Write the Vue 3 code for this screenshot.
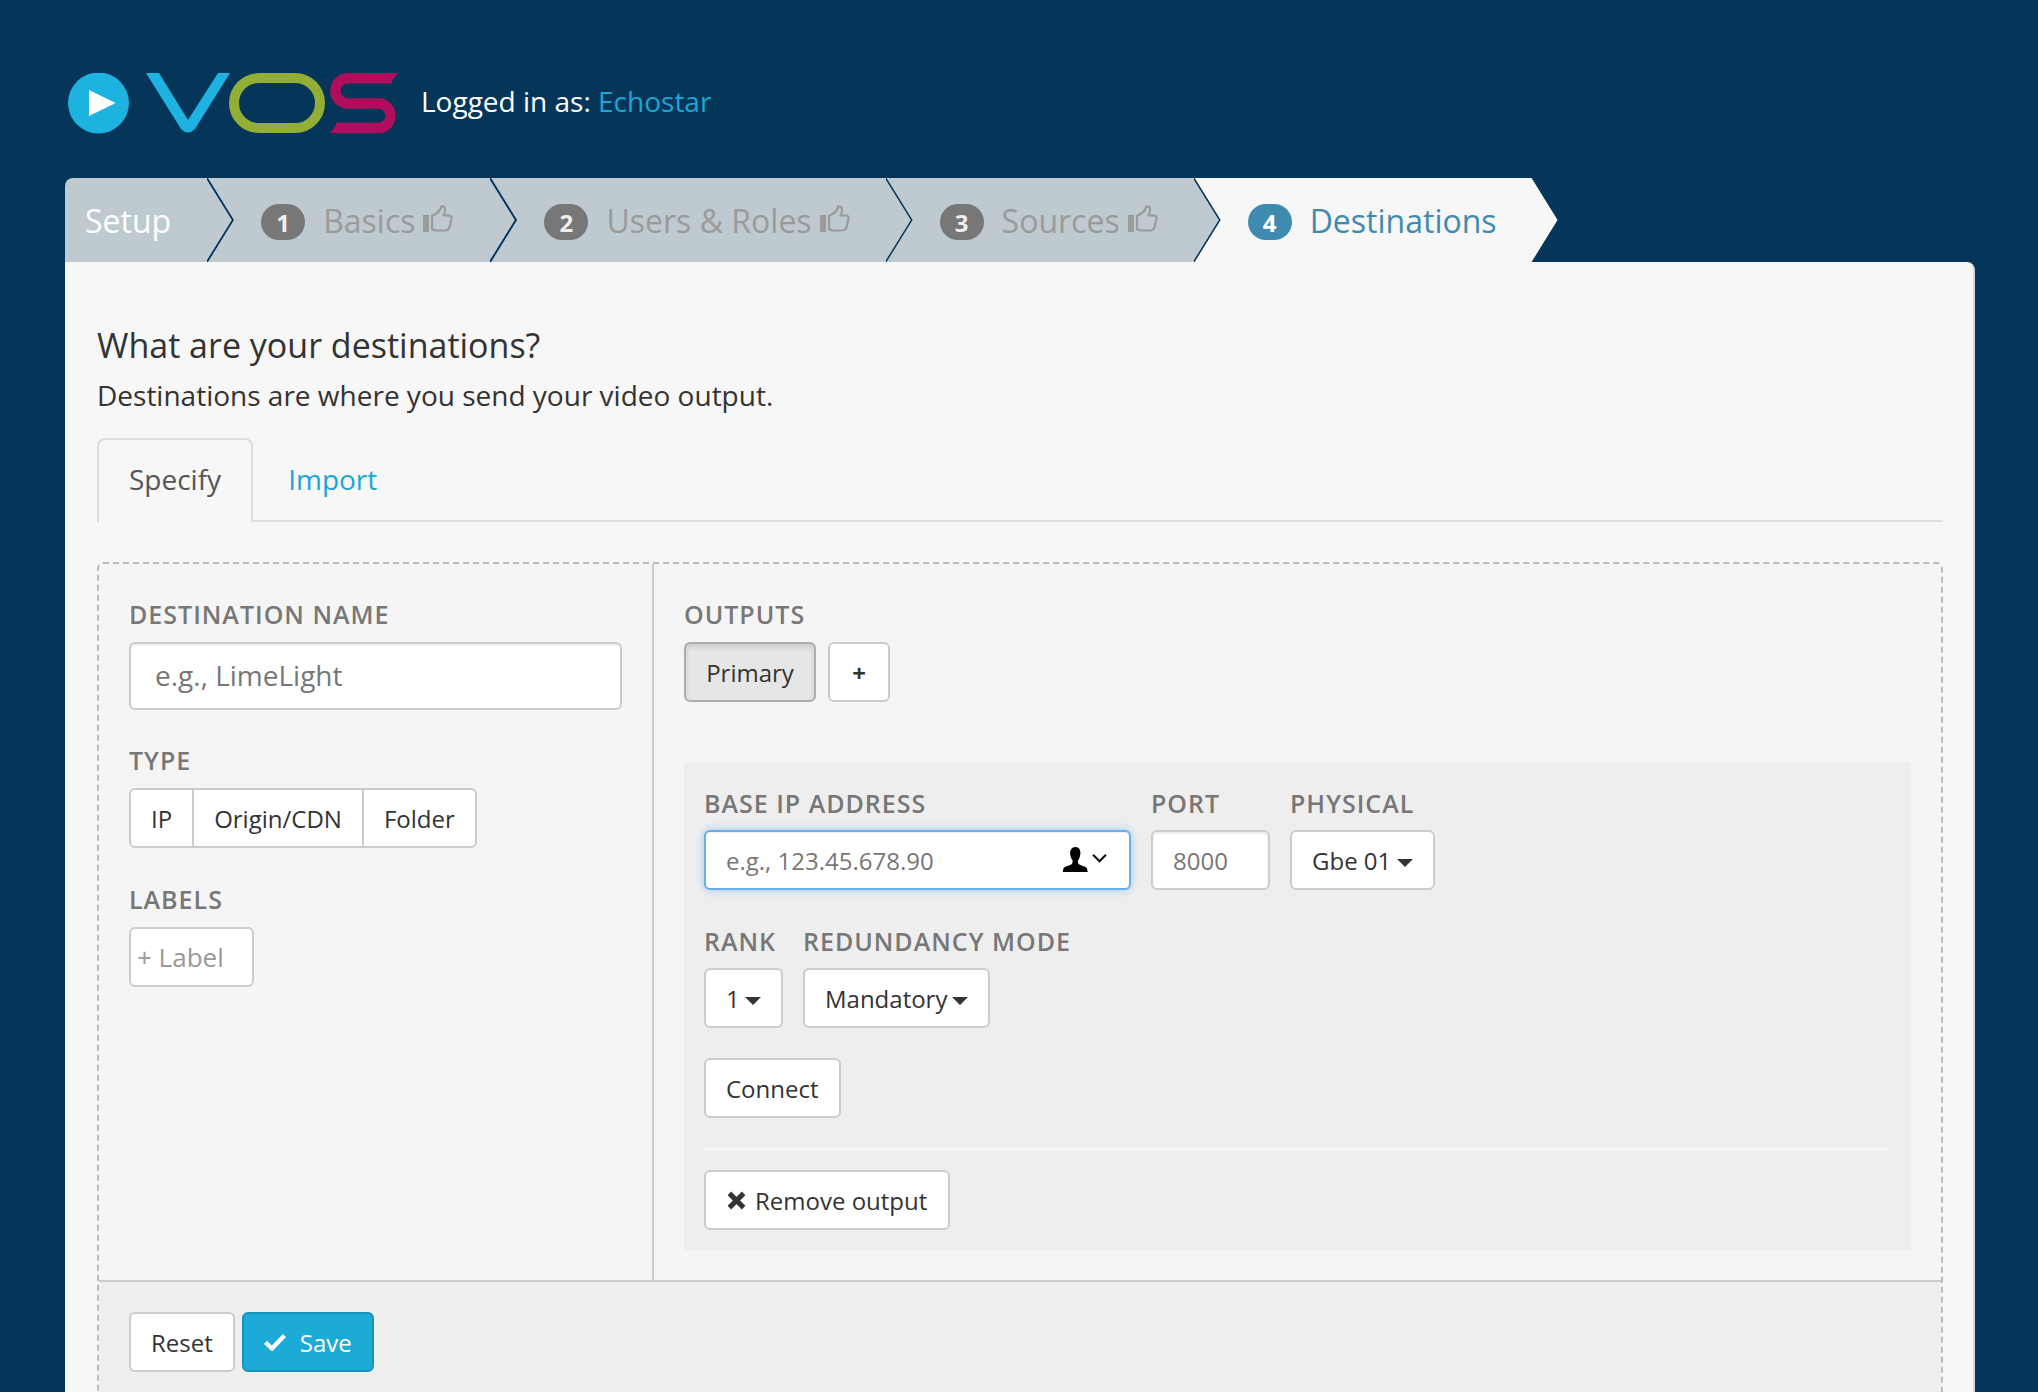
<script setup>
const steps = [
  { label: 'Basics', num: 1, done: true },
  { label: 'Users & Roles', num: 2, done: true },
  { label: 'Sources', num: 3, done: true },
  { label: 'Destinations', num: 4, active: true },
]
</script>

<template>
  <div class="page">
    <header class="header">
      <svg class="logo" viewBox="0 0 331 61" width="331" height="61">
        <circle cx="30.5" cy="30" r="30.5" fill="#1db2df" />
        <path d="M21 17 L47.7 30 L21 43 Z" fill="#fff" />
        <path d="M78 0 H91 L120 47 L150 0 H162 L127 56 Q120 63 113 56 Z" fill="#1db2df" />
        <rect x="166" y="5" width="86" height="50" rx="25" fill="none" stroke="#93ad35" stroke-width="10" />
        <g transform="translate(1 0)">
          <path d="M323 5.2 H279 A12.6 12.6 0 0 0 279 30.5 H311 A12.4 12.4 0 0 1 311 55 H267" fill="none" stroke="#b00d5c" stroke-width="10.4" />
          <path d="M322 0 H329 L321 10.4 H322 Z M261 60 L269 49.8 H268 V60 Z" fill="#b00d5c" />
        </g>
      </svg>
      <div class="login">Logged in as: <a class="login-name">Echostar</a></div>
    </header>

    <nav class="steps">
      <div class="step step--title">
        <span>Setup</span>
        <svg class="step-line" viewBox="0 0 27 84" width="27" height="84"><path d="M0 0 L26 42 L0 84" fill="none" stroke="#05365a" stroke-width="2" /></svg>
      </div>
      <div v-for="s in steps" :key="s.num" class="step" :class="{ 'step--active': s.active }">
        <span class="badge">{{ s.num }}</span>
        <span>{{ s.label }}</span>
        <svg v-if="s.done" class="thumb" viewBox="0 0 30 27" width="30" height="27">
          <rect x="0" y="10" width="6" height="17" fill="#9b9b9b" />
          <path d="M9 11 L14 8 Q18 5 18 1.5 Q22 0.5 22 5 Q22 8 20.5 10.5 H26 Q29 10.5 28.5 14 L26.5 22 Q25.5 25.5 22 25.5 H14 Q11 25.5 9 24 Z" fill="none" stroke="#9b9b9b" stroke-width="2.2" stroke-linejoin="round" />
        </svg>
        <svg v-if="!s.active" class="step-line" viewBox="0 0 27 84" width="27" height="84"><path d="M0 0 L26 42 L0 84" fill="none" stroke="#05365a" stroke-width="2" /></svg>
      </div>
    </nav>

    <main class="card">
      <h2 class="title">What are your destinations?</h2>
      <p class="lead">Destinations are where you send your video output.</p>

      <div class="tabs">
        <a class="tab tab--active">Specify</a>
        <a class="tab">Import</a>
      </div>

      <section class="panel">
        <div class="columns">
          <div class="col-left">
            <label class="field-label">Destination name</label>
            <input class="input input--large" placeholder="e.g., LimeLight" />

            <label class="field-label field-label--type">Type</label>
            <div class="btn-group">
              <button class="btn">IP</button>
              <button class="btn">Origin/CDN</button>
              <button class="btn">Folder</button>
            </div>

            <label class="field-label field-label--labels">Labels</label>
            <button class="btn btn--label">+ Label</button>
          </div>

          <div class="col-right">
            <label class="field-label">Outputs</label>
            <div class="outputs">
              <button class="btn btn--pressed">Primary</button>
              <button class="btn btn--plus">+</button>
            </div>

            <div class="output-box">
              <div class="row">
                <div class="cell">
                  <label class="field-label">Base IP address</label>
                  <div class="ip-wrap">
                    <input class="input input--ip" placeholder="e.g., 123.45.678.90" />
                    <span class="ip-menu">
                      <svg viewBox="0 0 24 22" width="27" height="25">
                        <path d="M12 0 C15.5 0 16.5 3 16.3 6 C16.1 9 15 11 14 12.2 L14.6 15 C16.5 16.3 20.5 17 22 18.5 L22.8 22 H0.8 L1.5 18.5 C3 17 7 16.3 9 15 L9.6 12.2 C8.6 11 7.5 9 7.3 6 C7.1 3 8.5 0 12 0 Z" fill="#000" />
                      </svg>
                      <svg viewBox="0 0 14 9" width="15" height="10">
                        <path d="M1 1.5 L7 7.5 L13 1.5" fill="none" stroke="#111" stroke-width="2" />
                      </svg>
                    </span>
                  </div>
                </div>
                <div class="cell">
                  <label class="field-label">Port</label>
                  <input class="input input--port" placeholder="8000" />
                </div>
                <div class="cell">
                  <label class="field-label">Physical</label>
                  <button class="btn">Gbe 01 <i class="caret"></i></button>
                </div>
              </div>

              <div class="row row--second">
                <div class="cell">
                  <label class="field-label">Rank</label>
                  <button class="btn">1 <i class="caret"></i></button>
                </div>
                <div class="cell">
                  <label class="field-label">Redundancy mode</label>
                  <div><button class="btn btn--mode">Mandatory <i class="caret"></i></button></div>
                </div>
              </div>

              <button class="btn btn--connect">Connect</button>
              <hr class="divider" />
              <button class="btn btn--remove">
                <svg viewBox="0 0 16 16" width="19" height="19"><path d="M2 2 L14 14 M14 2 L2 14" stroke="#333" stroke-width="4.2" fill="none" /></svg>
                Remove output
              </button>
            </div>
          </div>
        </div>

        <footer class="actions">
          <button class="btn">Reset</button>
          <button class="btn btn--save">
            <svg viewBox="0 0 22 18" width="22" height="18"><path d="M1.5 9.5 L8 15.5 L20.5 2.5" fill="none" stroke="#fff" stroke-width="4.4" /></svg>
            Save
          </button>
        </footer>
      </section>
    </main>
  </div>
</template>

<style>
html, body { margin: 0; background: #05365a; }
</style>

<style scoped>
.page {
  height: 1392px;
  overflow: hidden;
  padding: 0 63px 0 65px;
  box-sizing: border-box;
  background: #05365a;
  font-family: "Open Sans", "Liberation Sans", sans-serif;
  color: #333;
}

.header {
  height: 178px;
  display: flex;
  align-items: flex-start;
  padding: 73px 0 0 3px;
  box-sizing: border-box;
}
.logo { flex: none; }
.login {
  margin: 9px 0 0 22px;
  font-size: 28px;
  line-height: 38px;
  color: #fff;
}
.login-name { color: #1ba6d3; }

.steps {
  display: flex;
  height: 84px;
}
.step {
  position: relative;
  display: flex;
  align-items: center;
  height: 84px;
  margin-left: -28px;
  padding: 0 63px 0 55px;
  background: #bec9d0;
  clip-path: polygon(0 0, calc(100% - 26px) 0, 100% 50%, calc(100% - 26px) 100%, 0 100%);
  font-size: 32px;
  color: #9b9b9b;
  white-space: nowrap;
}
.step:nth-child(1) { z-index: 5; }
.step:nth-child(2) { z-index: 4; padding-right: 64px; }
.step:nth-child(3) { z-index: 3; }
.step:nth-child(4) { z-index: 2; }
.step--title {
  margin-left: 0;
  padding-left: 20px;
  color: #fff;
  border-top-left-radius: 8px;
}
.step--active {
  background: #f6f7f6;
  color: #3f8bb0;
  padding-right: 61px;
}
.step-line {
  position: absolute;
  top: 0;
  right: 0;
}
.badge {
  width: 44px;
  height: 36px;
  margin: 3px 18px 0 0;
  border-radius: 18px;
  background: #777;
  color: #eee;
  font-size: 24px;
  font-weight: 700;
  line-height: 38px;
  text-align: center;
}
.step--active .badge {
  background: #3f8bb0;
  color: #fff;
}
.thumb { margin-left: 8px; margin-top: -4px; }

.card {
  min-height: 1200px;
  padding: 0 30px 40px 32px;
  background: #f6f7f6;
  border-right: 2px solid #d4d6d6;
  border-radius: 0 8px 0 0;
}
.title {
  margin: 0;
  padding-top: 61px;
  font-size: 34px;
  font-weight: 400;
  line-height: 44px;
}
.lead {
  margin: 8px 0 0;
  font-size: 28px;
  line-height: 40px;
  color: #333;
}
.tabs {
  display: flex;
  height: 82px;
  margin-top: 23px;
  border-bottom: 2px solid #ddd;
  font-size: 28px;
}
.tab {
  height: 82px;
  padding: 0 35px;
  line-height: 82px;
  color: #1ba6d3;
  box-sizing: border-box;
}
.tab--active {
  padding: 0 30px;
  border: 2px solid #ddd;
  border-bottom: 0;
  border-radius: 8px 8px 0 0;
  background: #f6f7f6;
  color: #555;
  height: 84px;
  line-height: 79px;
}

.panel {
  margin-top: 40px;
  border: 2px dashed #bbb;
  border-bottom: 0;
  border-radius: 6px 6px 0 0;
  background: #f5f5f5;
}
.columns {
  display: flex;
  height: 716px;
}
.col-left {
  width: 555px;
  flex: none;
  padding: 34px 30px 0;
  box-sizing: border-box;
  border-right: 2px solid #ccc;
}
.col-right {
  flex: 1;
  padding: 34px 30px 0;
}
.field-label {
  display: block;
  height: 32px;
  margin-bottom: 12px;
  font-size: 25px;
  font-weight: 600;
  line-height: 32px;
  letter-spacing: 1px;
  text-transform: uppercase;
  color: #777;
}
.field-label--type { margin-top: 34px; }
.field-label--labels { margin-top: 35px; }
.output-box .field-label { margin-bottom: 11px; }

.btn {
  height: 60px;
  padding: 0 20px;
  border: 2px solid #ccc;
  border-radius: 6px;
  background: #fff;
  font-family: inherit;
  font-size: 24px;
  color: #333;
  white-space: nowrap;
  box-sizing: border-box;
}
.btn-group { display: flex; }
.btn-group .btn { border-radius: 0; margin-left: -2px; }
.btn-group .btn:first-child { border-radius: 6px 0 0 6px; margin-left: 0; }
.btn-group .btn:last-child { border-radius: 0 6px 6px 0; }
.btn--label {
  width: 125px;
  padding: 0 6px;
  font-size: 26px;
  text-align: left;
  color: #999;
}

.input {
  display: block;
  height: 60px;
  padding: 0 20px;
  border: 2px solid #ccc;
  border-radius: 6px;
  background: #fff;
  font-family: inherit;
  font-size: 24px;
  box-sizing: border-box;
  outline: none;
  box-shadow: inset 0 2px 2px rgba(0, 0, 0, 0.07);
}
.input::placeholder { color: #777; opacity: 1; }
.input--large {
  width: 100%;
  height: 68px;
  padding: 0 24px 2px;
  font-size: 28px;
}
.input--ip {
  width: 427px;
  border-color: #66afe9;
  box-shadow: inset 0 1px 1px rgba(0, 0, 0, 0.07), 0 0 8px rgba(102, 175, 233, 0.6);
}
.input--port { width: 119px; }
.ip-wrap { position: relative; }
.ip-menu {
  position: absolute;
  top: 17px;
  right: 24px;
  display: flex;
  align-items: flex-start;
  gap: 1px;
}
.ip-menu svg:first-child { margin-right: 1px; width: 29px; }
.ip-menu svg:last-child { margin-top: 6px; }

.outputs {
  display: flex;
  gap: 12px;
}
.btn--pressed {
  width: 132px;
  background: #e6e6e6;
  border-color: #adadad;
  box-shadow: inset 0 3px 5px rgba(0, 0, 0, 0.125);
}
.btn--plus {
  width: 62px;
  padding: 0;
  font-weight: 700;
}
.output-box {
  margin-top: 60px;
  padding: 25px 20px 20px;
  height: 488px;
  box-sizing: border-box;
  background: #eee;
}
.row {
  display: flex;
  gap: 20px;
}
.row--second { margin-top: 35px; }
.cell { flex: none; }
.caret {
  display: inline-block;
  margin-left: -1px;
  vertical-align: middle;
  border-top: 8px solid #333;
  border-left: 8px solid transparent;
  border-right: 8px solid transparent;
}
.btn--mode .caret { margin-left: -2px; }
.btn--connect { display: block; margin-top: 30px; }
.divider {
  height: 2px;
  margin: 30px 0 20px;
  border: 0;
  background: #f5f5f5;
}
.btn--remove {
  display: flex;
  align-items: center;
  gap: 9px;
  padding: 0 21px;
}

.actions {
  display: flex;
  gap: 7px;
  height: 110px;
  padding: 30px 30px;
  border-top: 2px solid #ccc;
  background: #eee;
}
.btn--save {
  display: flex;
  align-items: center;
  gap: 14px;
  padding: 0 20px;
  border-color: #1893bd;
  background: #1caad6;
  color: #fff;
}
</style>
